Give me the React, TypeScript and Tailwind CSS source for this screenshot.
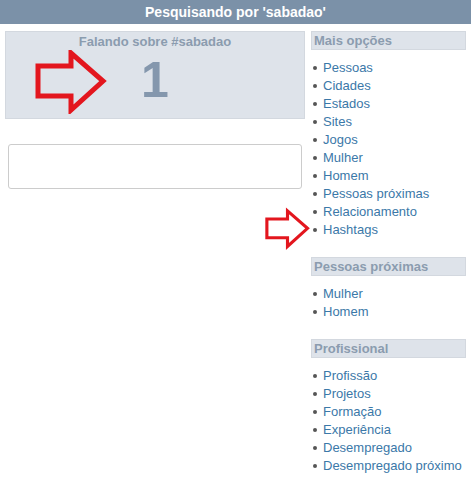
import React from 'react';

const sections = [
  {
    title: 'Mais opções',
    items: ['Pessoas', 'Cidades', 'Estados', 'Sites', 'Jogos', 'Mulher', 'Homem', 'Pessoas próximas', 'Relacionamento', 'Hashtags'],
  },
  { title: 'Pessoas próximas', items: ['Mulher', 'Homem'] },
  {
    title: 'Profissional',
    items: ['Profissão', 'Projetos', 'Formação', 'Experiência', 'Desempregado', 'Desempregado próximo'],
  },
];

// red annotation arrow (outline)
function Arrow({ className }: { className: string }) {
  return (
    <svg className={className} viewBox="0 0 72 64" fill="none">
      <path
        d="M3 16 H36 V3 L68 31 L36 60 V46 H3 Z"
        stroke="#e3161e"
        strokeWidth="5"
        strokeLinejoin="miter"
      />
    </svg>
  );
}

export default function App() {
  return (
    <div className="relative w-[471px] h-[483px] bg-white font-['Liberation_Sans',Arial,sans-serif] overflow-hidden">
      <div className="h-[24px] bg-[#7b91a8] flex items-center justify-center text-white font-bold text-[14px]">
        Pesquisando por 'sabadao'
      </div>

      <div className="flex pt-[7px] pl-[5px]">
        <div className="w-[300px]">
          <div className="h-[88px] bg-[#dee3ea] border border-[#d3d8df] flex flex-col items-center">
            <div className="mt-[2px] text-[13px] font-bold text-[#8b9caf] leading-[16px]">Falando sobre #sabadao</div>
            <div className="mt-[5px] text-[50px] font-bold text-[#8497ad] leading-[50px]">1</div>
          </div>
          <div className="mt-[25px] ml-[3px] w-[294px] h-[45px] border border-[#cccccc] rounded-[3px] bg-white" />
        </div>

        <div className="ml-[6px] w-[155px] flex flex-col">
          {sections.map((s, i) => (
            <div key={s.title} className={i > 0 ? 'mt-[18px]' : ''}>
              <div className="h-[19px] bg-[#dee3ea] border border-[#d3d8df] pl-[2px] flex items-center text-[13px] font-bold text-[#8b9caf]">
                {s.title}
              </div>
              <ul className="mt-[9px]">
                {s.items.map((it) => (
                  <li key={it} className="flex items-center h-[18px] text-[13px] text-[#3b78a8]">
                    <span className="ml-[2px] mr-[6px] w-[4px] h-[4px] rounded-full bg-[#555]" />
                    {it}
                  </li>
                ))}
              </ul>
            </div>
          ))}
        </div>
      </div>

      <Arrow className="absolute left-[35px] top-[50px] w-[72px] h-[64px]" />
      <Arrow className="absolute left-[265px] top-[203px] w-[45px] h-[52px]" />
    </div>
  );
}
